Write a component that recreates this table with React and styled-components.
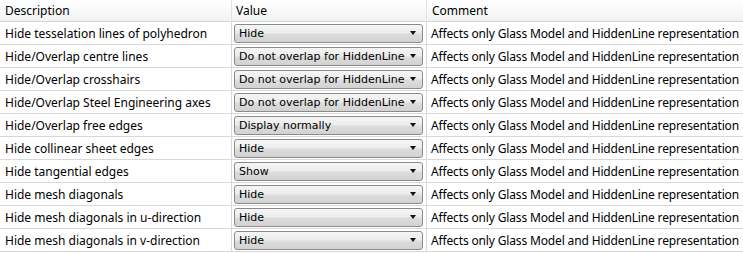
import React from 'react';
import styled, { createGlobalStyle } from 'styled-components';

const GlobalStyle = createGlobalStyle`
  html, body {
    margin: 0;
    padding: 0;
    background: #ffffff;
  }
  body {
    font-family: 'Noto Sans', 'Open Sans', sans-serif;
    font-size: 12px;
    color: #000;
  }
`;

const Grid = styled.div`
  display: grid;
  grid-template-columns: 232px 195px 1fr;
  width: 743px;
`;

const HeadCell = styled.div`
  height: 21px;
  line-height: 21px;
  padding-left: ${p => p.pad || 5}px;
  background: linear-gradient(#ffffff, #f1f2f3);
  border-bottom: 1px solid #d5d5d5;
  border-right: ${p => (p.last ? 'none' : '1px solid #e2e2e2')};
  white-space: nowrap;
`;

const Cell = styled.div`
  height: 22px;
  display: flex;
  align-items: center;
  padding-left: ${p => p.pad || 5}px;
  border-bottom: 1px solid #d8d8d8;
  border-right: ${p => (p.last ? 'none' : '1px solid #d8d8d8')};
  white-space: nowrap;
  overflow: hidden;
  letter-spacing: ${p => p.tight || 0}px;
`;

const Select = styled.div`
  width: 189px;
  height: 19px;
  box-sizing: border-box;
  display: flex;
  align-items: center;
  justify-content: space-between;
  padding: 0 6px 0 4px;
  border: 1px solid #8a8a8a;
  border-radius: 3px;
  background: linear-gradient(#f6f6f6 0%, #ececec 45%, #dcdcdc 55%, #d2d2d2 100%);
  font-family: 'DejaVu Sans', Verdana, sans-serif;
  font-size: 11px;
`;

const Arrow = styled.span`
  width: 0;
  height: 0;
  flex-shrink: 0;
  border-left: 3.5px solid transparent;
  border-right: 3.5px solid transparent;
  border-top: 4px solid #111;
`;

const rows = [
  ['Hide tesselation lines of polyhedron', 'Hide'],
  ['Hide/Overlap centre lines', 'Do not overlap for HiddenLine'],
  ['Hide/Overlap crosshairs', 'Do not overlap for HiddenLine'],
  ['Hide/Overlap Steel Engineering axes', 'Do not overlap for HiddenLine'],
  ['Hide/Overlap free edges', 'Display normally'],
  ['Hide collinear sheet edges', 'Hide'],
  ['Hide tangential edges', 'Show'],
  ['Hide mesh diagonals', 'Hide'],
  ['Hide mesh diagonals in u-direction', 'Hide'],
  ['Hide mesh diagonals in v-direction', 'Hide'],
];

const comment = 'Affects only Glass Model and HiddenLine representation';

export default function App() {
  return (
    <>
      <GlobalStyle />
      <Grid>
        <HeadCell>Description</HeadCell>
        <HeadCell pad={4}>Value</HeadCell>
        <HeadCell last>Comment</HeadCell>
        {rows.map(([desc, value]) => (
          <React.Fragment key={desc}>
            <Cell>{desc}</Cell>
            <Cell pad={2}>
              <Select>
                <span>{value}</span>
                <Arrow />
              </Select>
            </Cell>
            <Cell last pad={4} tight={-0.15}>{comment}</Cell>
          </React.Fragment>
        ))}
      </Grid>
    </>
  );
}
